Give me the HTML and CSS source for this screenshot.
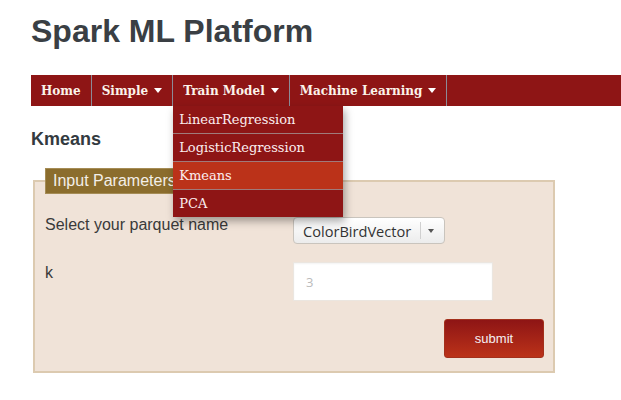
FILE: index.html
```html
<!DOCTYPE html>
<html>
<head>
<meta charset="utf-8">
<link rel="stylesheet" href="styles.css">
</head>
<body>
<div class="page">
  <h1 class="title">Spark ML Platform</h1>
  <nav class="navbar">
    <div class="nav-item">Home</div>
    <div class="nav-item">Simple <span class="caret"></span></div>
    <div class="nav-item open">Train Model <span class="caret"></span>
      <ul class="dropdown">
        <li>LinearRegression</li>
        <li>LogisticRegression</li>
        <li class="active">Kmeans</li>
        <li>PCA</li>
      </ul>
    </div>
    <div class="nav-item">Machine Learning <span class="caret"></span></div>
  </nav>
  <h2 class="section-title">Kmeans</h2>
  <fieldset class="params">
    <legend class="params-legend">Input Parameters</legend>
    <div class="form-grid">
      <div class="label">Select your parquet name</div>
      <div class="control">
        <div class="select-btn"><span class="select-text">ColorBirdVector</span><span class="select-sep"></span><span class="select-caret"></span></div>
      </div>
      <div class="label label-k">k</div>
      <div class="control">
        <div class="text-input"><span class="placeholder">3</span></div>
      </div>
    </div>
    <div class="actions">
      <button class="submit-btn">submit</button>
    </div>
  </fieldset>
</div>
</body>
</html>
```
FILE: styles.css
```css
html, body {
  margin: 0;
  padding: 0;
  background: #ffffff;
}
.page {
  padding-left: 31px;
  font-family: "Liberation Sans", Arial, sans-serif;
  color: #333333;
}
.title {
  margin: 0;
  padding-top: 12px;
  font-size: 32px;
  line-height: 38px;
  font-weight: bold;
  color: #3a3f44;
}
.navbar {
  margin-top: 25px;
  height: 31px;
  background: #8e1515;
  display: flex;
  align-items: stretch;
}
.nav-item {
  position: relative;
  display: flex;
  align-items: center;
  padding: 0 10px;
  border-right: 1px solid #8c8a96;
  font-family: "DejaVu Serif", serif;
  font-weight: bold;
  font-size: 12px;
  color: #fbf3ea;
}
.caret {
  display: inline-block;
  width: 0;
  height: 0;
  margin-left: 6px;
  border-left: 4px solid transparent;
  border-right: 4px solid transparent;
  border-top: 5px solid #ffffff;
}
.dropdown {
  position: absolute;
  left: 0;
  top: 31px;
  width: 170px;
  margin: 0;
  padding: 0;
  list-style: none;
  background: #8e1515;
  box-shadow: 2px 4px 8px rgba(0, 0, 0, 0.35);
  z-index: 10;
}
.dropdown li {
  height: 27px;
  line-height: 27px;
  padding-left: 6px;
  border-bottom: 1px solid #a07a7a;
  font-family: "DejaVu Serif", serif;
  font-weight: normal;
  font-size: 13px;
  color: #fbeef0;
}
.dropdown li:last-child {
  border-bottom: none;
}
.dropdown li.active {
  background: #bb3219;
}
.section-title {
  margin: 22px 0 0 0;
  font-size: 18px;
  line-height: 22px;
  font-weight: bold;
  color: #333a40;
}
.params {
  margin: 18px 0 0 2px;
  width: 522px;
  padding: 0 9px 13px 10px;
  border: 2px solid #dccab0;
  background: #f0e3d8;
  box-sizing: border-box;
}
.params-legend {
  margin-left: 0;
  padding: 0 7px;
  height: 24px;
  line-height: 24px;
  background: #8b6d2d;
  border: 1px solid #a58c55;
  color: #f3efe8;
  font-size: 16px;
}
.form-grid {
  display: grid;
  grid-template-columns: 248px 200px;
  row-gap: 18px;
  margin-top: 23px;
}
.label {
  font-size: 16px;
  line-height: 16px;
  color: #3a3a3a;
}
.label-k {
  padding-top: 3px;
}
.select-btn {
  display: inline-flex;
  align-items: center;
  height: 27px;
  box-sizing: border-box;
  padding: 0 10px 0 9px;
  border: 1px solid #c9c4bd;
  border-radius: 4px;
  background: linear-gradient(#ffffff, #ececec);
  font-family: "Open Sans", "DejaVu Sans", sans-serif;
  font-size: 14.6px;
  color: #333333;
}
.select-sep {
  display: inline-block;
  width: 1px;
  height: 17px;
  margin: 0 7px 0 9px;
  background: #d0d0d0;
}
.select-caret {
  display: inline-block;
  width: 0;
  height: 0;
  border-left: 3px solid transparent;
  border-right: 3px solid transparent;
  border-top: 4px solid #555555;
}
.text-input {
  width: 200px;
  height: 39px;
  box-sizing: border-box;
  background: #ffffff;
  border: 1px solid #ebe6e0;
  display: flex;
  align-items: center;
  padding-left: 12px;
  box-shadow: inset 0 1px 2px rgba(0,0,0,0.05);
}
.placeholder {
  font-family: "Open Sans", "DejaVu Sans", sans-serif;
  font-size: 13px;
  color: #bbbbbb;
}
.actions {
  display: flex;
  justify-content: flex-end;
  margin-top: 18px;
}
.submit-btn {
  width: 100px;
  height: 39px;
  border: 1px solid #a3301c;
  border-radius: 3px;
  background: linear-gradient(#8e1515, #bb3219);
  color: #f4f0f4;
  font-family: "Liberation Sans", Arial, sans-serif;
  font-size: 13px;
}
```
